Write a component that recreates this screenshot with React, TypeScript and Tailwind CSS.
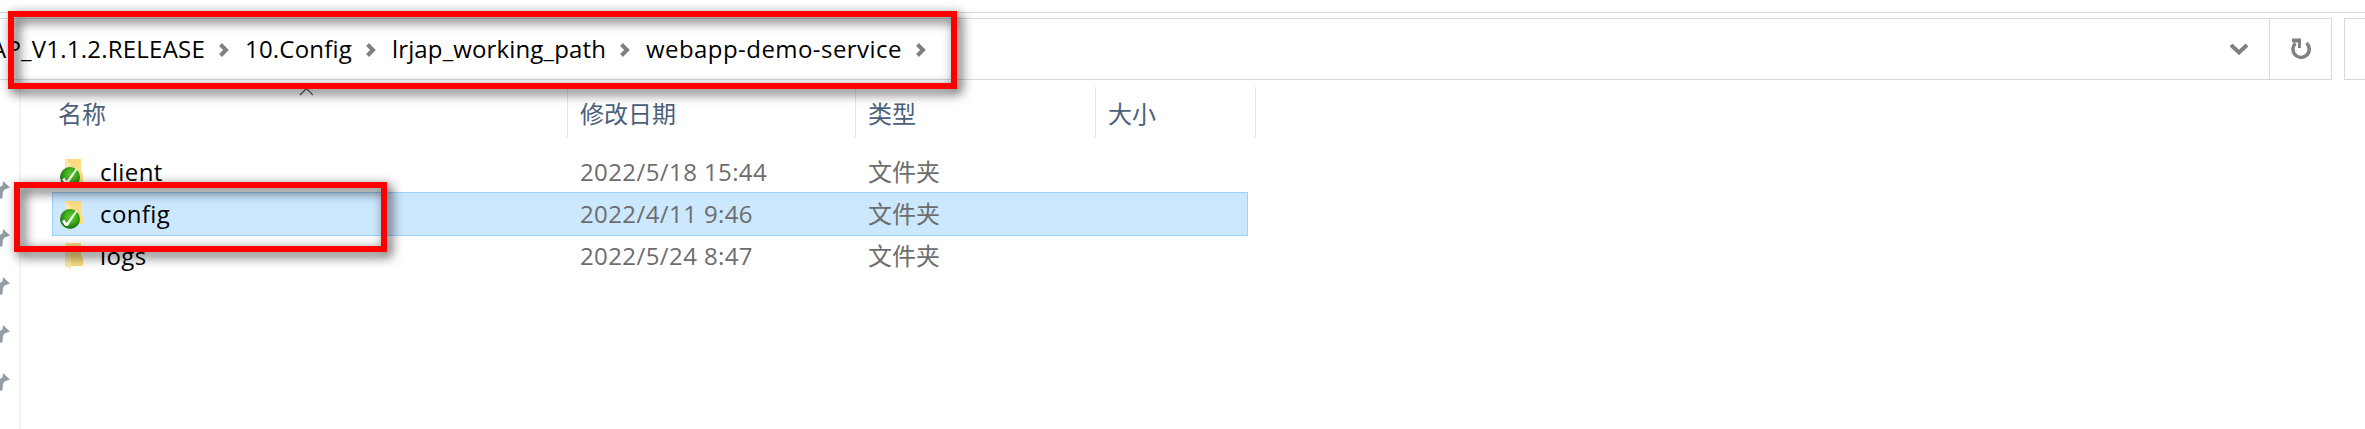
import React from "react";

const crumbs = [
  { label: "10.Config", box: "w-[147px]", spacing: "tracking-[0.2px]" },
  { label: "lrjap_working_path", box: "w-[254px]", spacing: "tracking-[0.14px]" },
  { label: "webapp-demo-service", box: "w-[296px]", spacing: "tracking-[0.44px]" },
];

const rows = [
  { name: "client", date: "2022/5/18 15:44", type: "文件夹", synced: true, selected: false },
  { name: "config", date: "2022/4/11 9:46", type: "文件夹", synced: true, selected: true },
  { name: "logs", date: "2022/5/24 8:47", type: "文件夹", synced: false, selected: false },
];

function Chevron() {
  return (
    <svg width="10" height="14" viewBox="0 0 10 14" className="relative top-[1px] shrink-0">
      <path d="M1.5 1.5L7 7L1.5 12.5" fill="none" stroke="#808080" strokeWidth="4" />
    </svg>
  );
}

function Pin() {
  return (
    <svg width="10" height="18" viewBox="0 0 10 18" className="block">
      <path d="M3 0L10 6.6L4.6 8.6L3 11L2.4 17L0 18V6L2.6 4Z" fill="#929da5" />
    </svg>
  );
}

function Folder({ synced }: { synced: boolean }) {
  return (
    <svg width="24" height="30" viewBox="0 0 24 30" className="shrink-0">
      <path d="M5 2H21V15L23 17V25H10Z" fill="#fbdb80" />
      <path d="M5 2L11 7V28.500L5 25Z" fill="#fee9a9" />
      {synced && (
        <g>
          <circle cx="10" cy="20" r="10" fill="url(#badge)" />
          <path d="M2 22.500L4.200 20.500L6.600 24L16 11.500L17.200 12.500L7.800 27H5.400Z" fill="#fff" />
        </g>
      )}
    </svg>
  );
}

function Frame({ place }: { place: string }) {
  return (
    <div
      className={`pointer-events-none absolute border-[6px] border-[#ff0000] [filter:drop-shadow(4px_4px_6px_rgba(0,0,0,0.8))] ${place}`}
    />
  );
}

export default function App() {
  return (
    <div className="relative flex h-[429px] w-[2365px] flex-col overflow-hidden bg-white font-['Open_Sans','Noto_Sans_CJK_SC',sans-serif] text-[24px] leading-[36px] text-black">
      <svg width="0" height="0" className="absolute">
        <defs>
          <radialGradient id="badge" cx="0.55" cy="0.4">
            <stop offset="0" stopColor="#62cc30" />
            <stop offset="0.6" stopColor="#3fae18" />
            <stop offset="1" stopColor="#23800f" />
          </radialGradient>
        </defs>
      </svg>
      <div className="h-[13px] shrink-0 border-b border-[#d9d9d9]" />
      <div className="mt-[5px] flex h-[62px] shrink-0">
        <div className="flex w-[2332px] border-y border-r border-[#d9d9d9]">
          <div className="flex flex-1 items-center overflow-hidden">
            <div className="flex w-[219px] shrink-0 justify-end pr-[14px]">
              <span className="whitespace-nowrap tracking-[0.22px]">AP_V1.1.2.RELEASE</span>
            </div>
            {crumbs.map((c) => (
              <div key={c.label} className={`flex shrink-0 items-center ${c.box}`}>
                <Chevron />
                <span className={`ml-[16px] whitespace-nowrap ${c.spacing}`}>{c.label}</span>
              </div>
            ))}
            <Chevron />
          </div>
          <div className="flex w-[40px] items-center">
            <svg width="20" height="14" viewBox="0 0 20 14">
              <path d="M2 3L10 10.5L18 3" fill="none" stroke="#808080" strokeWidth="4" />
            </svg>
          </div>
          <div className="flex w-[62px] items-center border-l border-[#d9d9d9] pl-[20px]">
            <svg width="22" height="22" viewBox="0 0 22 22">
              <path d="M5.5 5.2A8.2 8.2 0 1 0 16.5 5" fill="none" stroke="#808080" strokeWidth="3.5" />
              <path d="M2 0.5H11V10H8V4.5H2Z" fill="#808080" />
            </svg>
          </div>
        </div>
        <div className="ml-3 flex-1 border-y border-l border-[#d9d9d9]" />
      </div>
      <div className="flex flex-1">
        <div className="flex w-[21px] shrink-0 flex-col gap-[30px] border-r-2 border-[#f5f5f5] pt-[101px]">
          <Pin />
          <Pin />
          <Pin />
          <Pin />
          <Pin />
        </div>
        <div className="flex flex-col pt-[7px]">
          <div className="flex h-[51px] text-[#4c607a]">
            <div className="w-[547px] border-r border-[#e5e5e5] pt-[9px] pl-[37px]">名称</div>
            <div className="w-[288px] border-r border-[#e5e5e5] pt-[9px] pl-[12px]">修改日期</div>
            <div className="w-[240px] border-r border-[#e5e5e5] pt-[9px] pl-[12px]">类型</div>
            <div className="w-[160px] border-r border-[#e5e5e5] pt-[9px] pl-[12px]">大小</div>
          </div>
          <div className="mt-[12px] ml-[31px] flex w-[1196px] flex-col">
            {rows.map((r) => (
              <div
                key={r.name}
                className={`-mb-[2px] flex h-[44px] items-center border pl-[7px] ${
                  r.selected ? "border-[#99d1ff] bg-[#cce8ff]" : "border-transparent"
                }`}
              >
                <Folder synced={r.synced} />
                <span className="ml-[16px] w-[480px] tracking-[0.4px]">{r.name}</span>
                <span className="w-[288px] tracking-[0.4px] text-[#6d6d6d]">{r.date}</span>
                <span className="text-[#6d6d6d]">{r.type}</span>
              </div>
            ))}
          </div>
        </div>
      </div>
      <svg width="14" height="8" viewBox="0 0 14 8" className="absolute top-[88px] left-[299px]">
        <path d="M1 7L7.500 0.500L14 7" fill="none" stroke="#555" strokeWidth="1.2" />
      </svg>
      <Frame place="left-[8px] top-[11px] h-[78px] w-[949px]" />
      <Frame place="left-[14px] top-[182px] h-[70px] w-[373px]" />
    </div>
  );
}
